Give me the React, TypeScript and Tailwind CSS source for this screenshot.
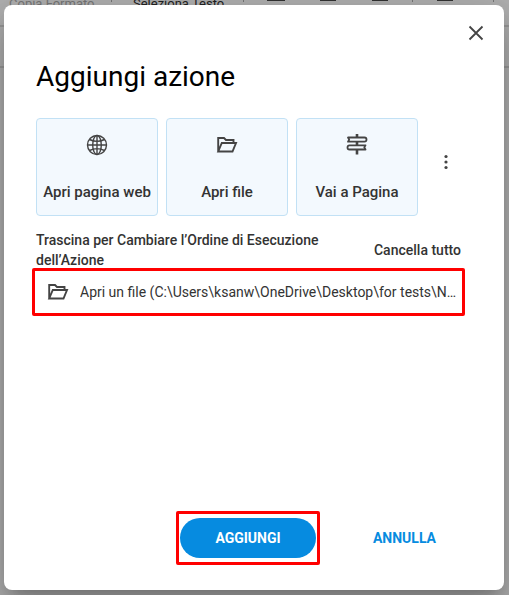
import { useState } from 'react';

const toolbarIcons = ['ml-[23px] w-[18px]', 'ml-[35px] w-4', 'ml-9 w-4'];

function GlobeIcon() {
  return (
    <svg className="size-6" viewBox="0 0 24 24" fill="none" stroke="#444" strokeWidth="1.4">
      <circle cx="12" cy="12" r="9.5" />
      <ellipse cx="12" cy="12" rx="4.3" ry="9.5" />
      <path d="M12 2.5v19M2.5 12h19M4.5 6.5c4.5 2.2 10.5 2.2 15 0M4.5 17.5c4.5-2.2 10.5-2.2 15 0" />
    </svg>
  );
}

function FolderIcon() {
  return (
    <svg className="size-6" viewBox="0 0 24 24" fill="none" stroke="#444" strokeWidth="1.9">
      <path d="M3.2 18.500V5h5.800l2 2h7.500v3M3.200 18.500 6.800 10H21L17.500 18.500Z" />
    </svg>
  );
}

function SignpostIcon() {
  return (
    <svg className="size-6" viewBox="0 0 24 24" fill="none" stroke="#444" strokeWidth="1.8" strokeLinejoin="round">
      <path d="M12 1v3M12 9v3.500M12 17v4.500" strokeWidth="2.6" />
      <path d="M3 4.500h16.500q2 0 2 2.100t-2 2.100H3l1.200-2.100ZM20.500 12.300H4.500q-2 0-2 2.100t2 2.100h16l-1.200-2.100Z" />
    </svg>
  );
}

const actions = [
  { label: 'Apri pagina web', Icon: GlobeIcon },
  { label: 'Apri file', Icon: FolderIcon },
  { label: 'Vai a Pagina', Icon: SignpostIcon },
];

function Toolbar() {
  return (
    <div className="h-[68px] overflow-hidden border-b-2 border-[#999] text-[13px]">
      <div className="flex h-[27px] items-start border-b-2 border-[#999] pl-[9px] whitespace-nowrap">
        <span className="-mt-1 w-[102px] shrink-0 leading-4 text-[#777]">Copia Formato</span>
        <span className="h-[2px] w-px shrink-0 bg-[#777]" />
        <span className="-mt-1 ml-[21px] w-[92px] shrink-0 leading-4 text-[#222]">Seleziona Testo</span>
        <span className="ml-[18px] h-[2px] w-px shrink-0 bg-[#777]" />
        {toolbarIcons.map((cls, i) => (
          <span key={i} className={`${cls} h-px shrink-0 bg-[#333]`} />
        ))}
        <span className="ml-6 h-[2px] w-px shrink-0 bg-[#777]" />
        <span className="ml-6 h-px w-4 shrink-0 bg-[#333]" />
        <span className="ml-10 h-[2px] w-px shrink-0 bg-[#777]" />
      </div>
    </div>
  );
}

export default function App() {
  const [items, setItems] = useState(['Apri un file (C:\\Users\\ksanw\\OneDrive\\Desktop\\for tests\\New folder)']);

  return (
    <div className="relative min-h-screen bg-[#b0b0b0] font-[Roboto,sans-serif] text-[#333]">
      <Toolbar />
      <div className="absolute inset-0 flex overflow-hidden p-[5px] pl-1">
        <div
          role="dialog"
          aria-labelledby="dialog-title"
          className="flex min-w-0 flex-1 flex-col rounded-lg bg-white pr-[39px] pb-[25px] pl-7 shadow-[0_11px_15px_-7px_rgba(0,0,0,0.2),0_24px_38px_3px_rgba(0,0,0,0.14),0_9px_46px_8px_rgba(0,0,0,0.12)]"
        >
          <button aria-label="Chiudi" className="mt-4 -mr-[23px] flex size-6 items-center justify-center self-end">
            <svg className="size-4" viewBox="0 0 16 16" stroke="#444" strokeWidth="1.8">
              <path d="M1.500 1.500l13 13M14.500 1.500l-13 13" />
            </svg>
          </button>
          <h1 id="dialog-title" className="mt-4 px-1 text-[28px] leading-8 text-black">Aggiungi azione</h1>

          <div className="mt-[25px] flex items-start gap-2 px-1">
            {actions.map(({ label, Icon }) => (
              <button
                key={label}
                className="flex h-[98px] w-[122px] shrink-0 flex-col items-center justify-between rounded-[4px] border border-[#c2e1f5] bg-[#f3f9fe] pt-[14px] pb-[11px] text-[15px] leading-6 font-medium whitespace-nowrap"
              >
                <Icon />
                {label}
              </button>
            ))}
            <button aria-label="Altro" className="mt-6 ml-2 flex h-10 w-6 items-center justify-center">
              <svg className="size-4" viewBox="0 0 16 16" fill="#444">
                <circle cx="8" cy="2.500" r="1.600" />
                <circle cx="8" cy="8" r="1.600" />
                <circle cx="8" cy="13.500" r="1.600" />
              </svg>
            </button>
          </div>

          <div className="mt-[14px] flex items-center justify-between gap-4 px-1 text-sm leading-5 font-medium">
            <p className="max-w-[290px]">Trascina per Cambiare l’Ordine di Esecuzione dell’Azione</p>
            <button className="shrink-0" onClick={() => setItems([])}>Cancella tutto</button>
          </div>

          <ul className="-mt-[2px] flex-1">
            {items.map((item) => (
              <li key={item} className="flex h-12 items-center gap-[10px] rounded-[2px] border-3 border-[#f00] pr-1 pl-[11px] text-sm">
                <span className="shrink-0"><FolderIcon /></span>
                <span className="truncate">{item}</span>
              </li>
            ))}
          </ul>

          <div className="flex items-center justify-end gap-6 text-sm font-bold">
            <div className="rounded-[2px] border-3 border-[#f00] px-px py-1">
              <button className="block h-10 w-[136px] rounded-full bg-[#068be0] text-white">AGGIUNGI</button>
            </div>
            <button className="h-10 w-[121px] text-[#068be0]">ANNULLA</button>
          </div>
        </div>
      </div>
    </div>
  );
}
